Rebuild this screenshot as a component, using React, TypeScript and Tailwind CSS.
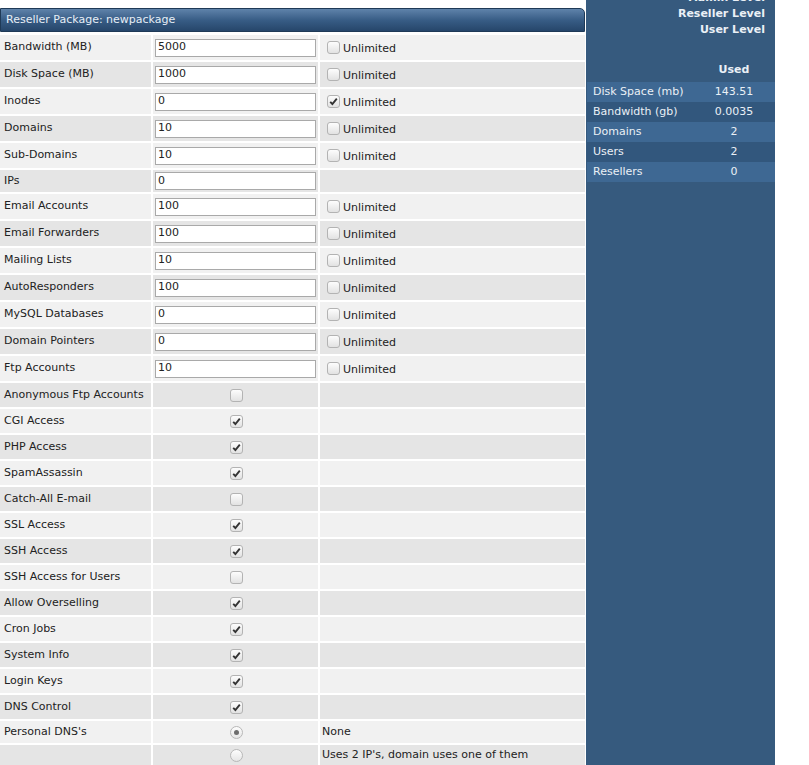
import React from "react";

type Row =
  | { kind: "input"; label: string; value: string; unlimited?: boolean; checked?: boolean }
  | { kind: "check"; label: string; checked: boolean }
  | { kind: "radio"; label: string; checked: boolean; text: string };

const ROWS: Row[] = [
  { kind: "input", label: "Bandwidth (MB)", value: "5000", unlimited: true },
  { kind: "input", label: "Disk Space (MB)", value: "1000", unlimited: true },
  { kind: "input", label: "Inodes", value: "0", unlimited: true, checked: true },
  { kind: "input", label: "Domains", value: "10", unlimited: true },
  { kind: "input", label: "Sub-Domains", value: "10", unlimited: true },
  { kind: "input", label: "IPs", value: "0" },
  { kind: "input", label: "Email Accounts", value: "100", unlimited: true },
  { kind: "input", label: "Email Forwarders", value: "100", unlimited: true },
  { kind: "input", label: "Mailing Lists", value: "10", unlimited: true },
  { kind: "input", label: "AutoResponders", value: "100", unlimited: true },
  { kind: "input", label: "MySQL Databases", value: "0", unlimited: true },
  { kind: "input", label: "Domain Pointers", value: "0", unlimited: true },
  { kind: "input", label: "Ftp Accounts", value: "10", unlimited: true },
  { kind: "check", label: "Anonymous Ftp Accounts", checked: false },
  { kind: "check", label: "CGI Access", checked: true },
  { kind: "check", label: "PHP Access", checked: true },
  { kind: "check", label: "SpamAssassin", checked: true },
  { kind: "check", label: "Catch-All E-mail", checked: false },
  { kind: "check", label: "SSL Access", checked: true },
  { kind: "check", label: "SSH Access", checked: true },
  { kind: "check", label: "SSH Access for Users", checked: false },
  { kind: "check", label: "Allow Overselling", checked: true },
  { kind: "check", label: "Cron Jobs", checked: true },
  { kind: "check", label: "System Info", checked: true },
  { kind: "check", label: "Login Keys", checked: true },
  { kind: "check", label: "DNS Control", checked: true },
  { kind: "radio", label: "Personal DNS's", checked: true, text: "None" },
  { kind: "radio", label: "", checked: false, text: "Uses 2 IP's, domain uses one of them" },
];

const STATS = [
  ["Disk Space (mb)", "143.51"],
  ["Bandwidth (gb)", "0.0035"],
  ["Domains", "2"],
  ["Users", "2"],
  ["Resellers", "0"],
];

function Box({ checked }: { checked?: boolean }) {
  return (
    <span className="inline-flex w-[13px] h-[13px] shrink-0 items-center justify-center rounded-[3px] border border-[#b3b3b3] bg-gradient-to-b from-[#fdfdfd] to-[#e2e2e2]">
      {checked && (
        <svg width="9" height="9" viewBox="0 0 9 9">
          <path d="M1.2 4.8 L3.4 7 L7.8 1.6" fill="none" stroke="#333" strokeWidth="1.9" />
        </svg>
      )}
    </span>
  );
}

function Radio({ checked }: { checked?: boolean }) {
  return (
    <span className="inline-flex w-[13px] h-[13px] items-center justify-center rounded-full border border-[#b8b8b8] bg-gradient-to-b from-[#fdfdfd] to-[#e6e6e6]">
      {checked && <span className="w-[5px] h-[5px] rounded-full bg-[#6d6d6d]" />}
    </span>
  );
}

export default function App() {
  return (
    <div className="w-[809px] h-[765px] overflow-hidden bg-white text-[11px] text-[#222] font-['DejaVu_Sans',Verdana,sans-serif] flex">
      <div className="w-[585px] pt-[8px]">
        <div className="h-[24px] flex items-center pl-[5px] rounded-tr-[5px] border border-[#1f3a57] bg-gradient-to-b from-[#5f83aa] via-[#385d86] to-[#26466a] text-[#e6eef6]">
          Reseller Package: newpackage
        </div>
        <div className="grid grid-cols-[151px_165px_265px] gap-[2px] pt-[3px]">
          {ROWS.map((r, i) => {
            const bg = i % 2 === 0 ? "bg-[#f1f1f1]" : "bg-[#e5e5e5]";
            const h =
              r.kind === "input"
                ? r.unlimited
                  ? "h-[25px]"
                  : "h-[22px]"
                : r.kind === "check"
                  ? "h-[24px]"
                  : i === ROWS.length - 1
                    ? "h-[20px]"
                    : "h-[22px]";
            return (
              <React.Fragment key={i}>
                <div className={`${bg} ${h} flex items-center pl-[4px] whitespace-nowrap`}>{r.label}</div>
                <div className={`${bg} ${h} flex items-center ${r.kind === "input" ? "pl-[2px]" : "justify-center pl-[1px]"}`}>
                  {r.kind === "input" && (
                    <div className="w-[161px] h-[18px] border border-[#a9a9a9] bg-white flex items-center pl-[2px]">
                      {r.value}
                    </div>
                  )}
                  {r.kind === "check" && <Box checked={r.checked} />}
                  {r.kind === "radio" && <Radio checked={r.checked} />}
                </div>
                <div className={`${bg} ${h} flex items-center pl-[7px] gap-[3px]`}>
                  {r.kind === "input" && r.unlimited && (
                    <>
                      <Box checked={r.checked} />
                      <span className="pt-[3px]">Unlimited</span>
                    </>
                  )}
                  {r.kind === "radio" && <span className="-ml-[5px]">{r.text}</span>}
                </div>
              </React.Fragment>
            );
          })}
        </div>
      </div>
      <div className="ml-[1px] w-[189px] bg-[#365a7e] text-[#eaf0f6]">
        <div className="-mt-[10px] pr-[10px] text-right font-bold leading-[16px]">
          <div>Admin Level</div>
          <div>Reseller Level</div>
          <div>User Level</div>
        </div>
        <div className="mt-[22px] h-[20px] flex items-center font-bold">
          <span className="w-[118px]" />
          <span className="w-[60px] text-center">Used</span>
        </div>
        <div className="ml-[1px] mt-[2px]">
          {STATS.map(([k, v], i) => (
            <div
              key={k}
              className={`h-[20px] flex items-center ${i % 2 === 0 ? "bg-[#3e6893]" : "bg-[#32577d]"}`}
            >
              <span className="w-[117px] pl-[6px] whitespace-nowrap">{k}</span>
              <span className="w-[60px] text-center">{v}</span>
            </div>
          ))}
        </div>
      </div>
    </div>
  );
}
